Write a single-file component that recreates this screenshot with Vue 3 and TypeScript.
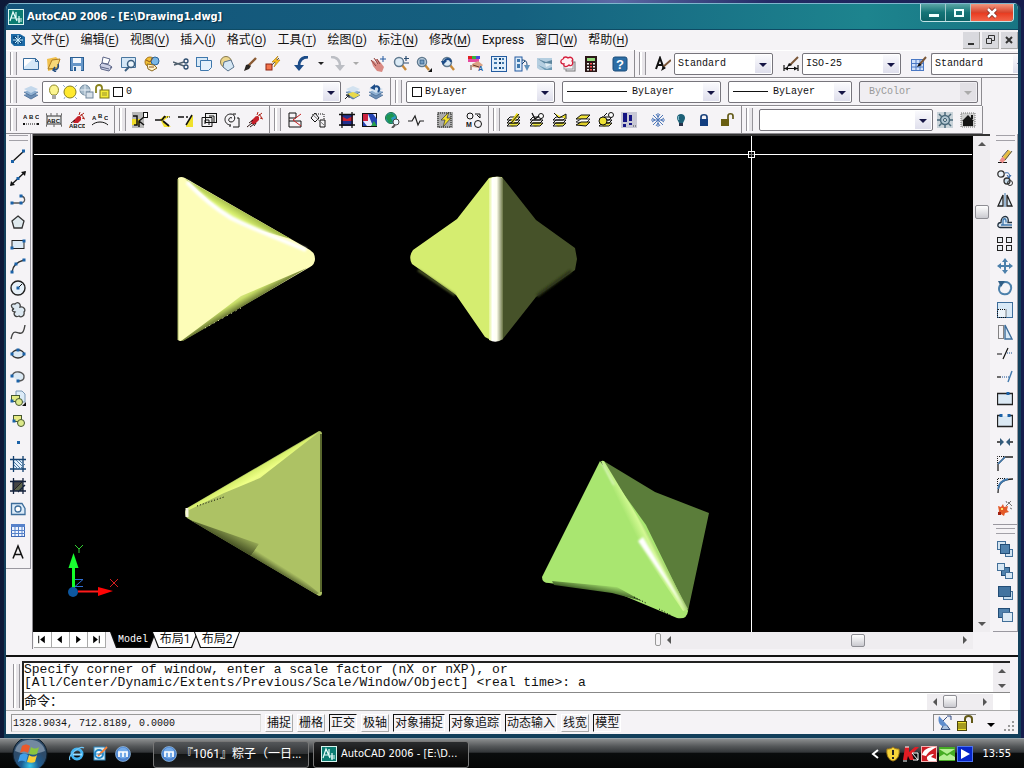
<script setup lang="ts">
import { h, ref } from 'vue'

const INK = '#111'
const NAVY = '#12406f'
const BLUE = '#3f78ad'

/* stroke, shape and label helpers for the 16-unit icon grid */
const p = (d: string, stroke = INK, fill = 'none', w = 1) =>
  `<path d="${d}" stroke="${stroke}" fill="${fill}" stroke-width="${w}"/>`
const f = (d: string, fill = INK) => `<path d="${d}" fill="${fill}"/>`
const c = (x: number, y: number, r: number, fill = 'none', stroke = INK, w = 1) =>
  `<circle cx="${x}" cy="${y}" r="${r}" fill="${fill}" stroke="${stroke}" stroke-width="${w}"/>`
const r = (x: number, y: number, w: number, hh: number, fill = 'none', stroke = 'none') =>
  `<rect x="${x}" y="${y}" width="${w}" height="${hh}" fill="${fill}" stroke="${stroke}"/>`
const dot = (x: number, y: number) => r(x - 1.5, y - 1.5, 3, 3, '#1b62a8')
const t = (x: number, y: number, s: string, size = 6, fill = INK, weight = 700) =>
  `<text x="${x}" y="${y}" font-size="${size}" font-weight="${weight}" font-family="Liberation Sans, sans-serif" fill="${fill}">${s}</text>`
const dash = (d: string, stroke = INK) => `<path d="${d}" stroke="${stroke}" fill="none" stroke-dasharray="1 1"/>`
const sheets = (top: string) =>
  f('M1 11l7-3 7 3-7 4z', '#6d8fb5') + f('M1 8l7-3 7 3-7 4z', '#8fb0d2') + f('M1 5l7-3 7 3-7 4z', top) + p('M1 8l7 4 7-4M1 11l7 4 7-4', '#54779f')
const layerStack = f('M2 11l8-1 4 2-8 3z', '#e8e23a') + p('M1 8l3-3h10l-3 3zM1 11l3-3h10l-3 3zM1 14l3-3h10l-3 3z')
const lens = (x: number, y: number) => p(`M${x + 3} ${y + 3}l4 5`, '#c98b3a', 'none', 2.4) + c(x, y, 4.5, '#dcebf6', '#60798f', 1.5)
const spark = p('M10 5l5-4M10 3l1-3M13 6l3 1M12 2l3 4', '#b02318')
const glove = f('M4 9l5-5 3 1 0 3-4 4-3 0z', '#c5202a') + p('M0 15l5-4M3 15l4-3M2 11l4-3M7 14l2-3', '#2a1010')
const brush = f('M2 15l2-6 3-1 2 2-2 3z', '#2b2622') + p('M7 9l7-7', '#8a5a33', 'none', 2.4)

const icons: Record<string, string> = {
  app: r(0, 0, 16, 16, '#0b7c72') + r(.5, .5, 15, 15, 'none', '#d8f5ef') + p('M2 12L5 3l4 9M8 3v7h6M3 9h4M11 7v7M14 12h-4', '#e9fffb', 'none', 1.2),
  dwg: f('M1 2h9l5 3v9H4L1 11z', '#1d6aa6') + r(3, 4, 9, 8, '#0d4e86') + p('M8 3v9M3 8h10M5 5l6 6M11 5l-6 6', '#c9efff'),
  new: p('M.5 2.5h12l3 3v8H.5z', '#376b9d', '#d5e8f8') + f('M1 3h9L1 11z', '#fff') + p('M12.5 2.500v3h3', '#376b9d'),
  open: f('M1 3l9-2 3 3-3 9-8 2z', '#f1c04d') + p('M2 13L6 4l8-1-3 9z', '#ad7d22', '#f8d977') + p('M8 14c4 0 5-3 4-6M9 11l-2 3 3 2', '#244f80', 'none', 1.5),
  save: r(1.5, 1.5, 13, 13, '#6797c8', '#2a5e93') + r(4, 2, 8, 5, '#f4f8fd') + r(4, 10, 8, 5, '#e9f1f9') + r(5, 11, 2, 4, '#2a5e93'),
  print: p('M5 1l7 2-2 5-6-1z', '#5c6587', '#fff') + p('M2 9l2-2 7 2 3 2-3 4-8-2z', '#5c6587', '#cdd1e6') + p('M3 11l8 2M12 12l2-1', '#5c6587'),
  preview: p('M.5 1.5h14v10H.5z', '#49769f', '#d5e7f6') + c(10, 8, 3.500, '#eef6fc', '#3b5f80', 1.5) + p('M8 11l-4 4', '#3b5f80', 'none', 2),
  publish: c(6, 6, 5, '#f2bf33', '#a9761c') + c(11, 5, 4, '#7bb8e6', '#2a639a') + p('M3 8l7 1 3 3-5 3-4-2z', '#8d6a1e', '#fff2c9') + p('M2 4l4 2 3-4M5 11h5', '#8c541b'),
  cut: c(13, 5, 2, 'none', '#2c4c6e', 1.3) + c(13, 11, 2, 'none', '#2c4c6e', 1.3) + p('M0 6l11 4M1 9l10-3', '#51606e', 'none', 1.5),
  copy: r(.5, 1.5, 11, 9, '#d8e9f7', '#3f78ad') + p('M4.500 4.500h11v7l-3 3h-8z', '#3f78ad', '#e6f1fb'),
  paste: c(7, 6, 5.500, '#ecd68d', '#87784b') + p('M5 6l7-2 3 7-6 4-5-4z', '#57728d', '#d6e7f4'),
  match: brush,
  block: r(1, 8, 6, 6, '#f3744c', '#8d2412') + p('M7 9l7-7', '#555') + f('M13 0L7 6h4l-2 5 6-7h-4z', '#ffc423') + p('M13 0L7 6h4l-2 5 6-7h-4z', '#ab7500', 'none', .6),
  undo: p('M14 1C7 1 5 5 5 10', '#1c4c88', 'none', 2.8) + f('M0 9h10l-5 6z', '#1c4c88'),
  redo: p('M2 1c7 0 9 4 9 9', '#bcbec4', 'none', 2.6) + f('M16 9H6l5 6z', '#bcbec4'),
  drop: f('M5 6h6l-3 3z', '#222'),
  dropOff: f('M5 6h6l-3 3z', '#aaa'),
  pan: f('M1 4l3 1 3 3-2-5 2 0 4 4 3 4-2 5-5-1-4-5z', '#d98983') + p('M1 4l5 6M4 2l4 6M7 3l3 5', '#8b4542') + p('M13 0v6M10 3h6', '#245ba0'),
  zoomRt: lens(6, 6) + p('M13 0v5M11 2.500h5M11 7h5', '#2a4c70', 'none', 1.2),
  zoomWin: lens(6, 6) + r(4, 4, 4, 4, '#729bc1', '#3b648c') + f('M16 12v4h-4z'),
  zoomPrev: lens(8, 6) + p('M12 6C11 2 7 2 5 6', '#1c4c88', 'none', 1.8) + f('M2 5h6L4 9z', '#1c4c88'),
  props: r(0, 0, 4, 3, '#e02020') + r(4, 0, 4, 3, '#36b53c') + r(8, 0, 4, 3, '#4a4ae0') + r(0, 3, 11, 3, '#e64aa0') + f('M4 8l6-3 5 4-3 3-8-1z', '#dba284') + p('M5 9l6 2M3 14V9', '#663c2a') + t(10, 15, 'A', 7, '#245ba0'),
  center: r(.5, .5, 15, 15, '#e1eefa', '#245ba0') + [2, 6, 11].map(y => r(3, y, 3, 2, '#3f78ad') + r(8, y, 2, 2, '#12406f') + r(11, y, 2, 2, '#3f78ad')).join(''),
  palette: r(1, 1, 7, 14, '#deecf9', '#245ba0') + r(3, 3, 3, 3, '#3f78ad') + r(3, 8, 3, 4, '#3f78ad') + p('M8 4c5 0 5 3 5 6M8 8l3-3', NAVY) + f('M10 9l3 6 3-6z', '#5f91bb'),
  sheetset: f('M0 2h15v12H3l-3-2z', '#b5cee0') + f('M1 3l8 3 6-2v4l-5 1z', '#5c859e') + f('M1 9l9 4 5-2v3l-7 0z', '#6d9ab4') + f('M8 7l7 1-6 3z', '#e0edf4'),
  markup: r(6, 6, 9, 9, '#e7e7ee', '#777') + r(4, 4, 9, 9, '#f7f7fb', '#999') + p('M3 3C4 0 7 1 8 2c3-2 6 1 4 3 2 3-1 6-3 4-3 3-6 1-5-1C0 8 0 4 3 3z', '#d51f3c', '#fff1f3', 1.3),
  calc: r(2, 0, 12, 16, '#2b1717') + r(4, 2, 8, 3, '#93d97b') + [7, 10, 13].map(y => r(4, y, 2, 1.500, '#eee') + r(7, y, 2, 1.500, '#f55') + r(10, y, 2, 1.500, '#eee')).join(''),
  help: `<rect x="1" y="1" width="14" height="14" rx="2" fill="#2c6da5" stroke="#1b4d7a"/>` + t(4, 13, '?', 13, '#fff'),
  textStyle: p('M1 13L5 2l4 11M2 9h6', INK, 'none', 2) + p('M8 11l8-7', '#7a5638', 'none', 2) + f('M6 15l2-5 3 2z'),
  dimStyle: p('M1 9v6M15 9v6M1 12.500h14', INK, 'none', 1.2) + f('M1 12.500l4-2v4zM15 12.500l-4-2v4z') + p('M7 9l8-8', '#7a5638', 'none', 2) + f('M4 11l2-4 3 2z'),
  tableStyle: r(.5, 3.500, 12, 11, '#cfe1fb', '#4a78c4') + p('M1 7.500h12M1 11h12M5 4v10M9 4v10', '#4a78c4') + p('M9 8l6-7', '#7a5638', 'none', 2) + f('M6 11l2-4 3 2z'),
  layers: sheets('#c3d7eb'),
  layerCur: sheets('#d3e2f0') + f('M2 10l7 4 6-3-7-3z', '#e8d94a') + p('M0 15l4-4M1 11h3v3', '#222'),
  layerPrev: sheets('#d3e2f0') + p('M10 8c3-4 0-7-4-5', '#1c4c88', 'none', 2) + f('M2 4l5-4v6z', '#1c4c88'),
  bulb: p('M6 11C2 8 3 1 8 1s6 7 2 10z', '#8f8a2a', '#fcf590') + r(6, 11, 4, 4, '#a7a7a7'),
  sun: c(8, 8, 6, '#ffe92e', '#877f1f') + p('M3 13l-1 2M13 13l2 2M3 3L1 1M13 3l2-2', '#92abd0'),
  freeze: c(7, 6, 5, '#a7bbcb', '#6f899e') + r(8, 8, 7, 6, '#d9e2ea', '#70869b') + p('M7 1v10M2 6h10', '#e7f0f7'),
  unlock: p('M2 9V4c0-4 6-4 6 0v2', '#8a831c', 'none', 1.8) + r(6, 6, 9, 8, '#f6ec37', '#79731b') + p('M8 9h5M8 11h5', '#97902e'),
  swatch: r(3.500, 3.500, 9, 9, '#fff', INK),
  abcDots: t(0, 7, 'A', 6) + t(6, 7, 'B', 6) + t(12, 7, 'C', 6) + dash('M1 12h14') + r(0, 11, 2, 2, INK) + r(14, 11, 2, 2, INK),
  abcMask: r(1, 4, 14, 8, '#eee', '#333') + t(1, 11, 'ABC', 6) + p('M1 4L0 1M15 4l1-3M5 4V1M11 4V1M1 12l-1 3M15 12l1 3M8 12v3', '#666'),
  abcBurst: glove + spark + r(0, 11, 16, 5, '#f5f3f6') + t(0, 16, 'ABCD', 6),
  abcArc: t(0, 8, 'A', 6) + t(6, 6, 'B', 6) + t(12, 8, 'C', 6) + p('M0 13c4-4 12-4 16 0'),
  attach: r(0, 0, 12, 16, '#b8b8b8') + r(11.500, .5, 4, 5, '#fff', INK) + r(0, 7, 8, 6, '#f0dc26') + p('M1 4h4v9H2M12 5L7 9v6M7 9l5 4', INK, 'none', 1.5),
  clip1: f('M5 7l4-3h6L8 9l8 6H9z', '#f0e12c') + p('M0 8h7l3-4M8 9l6 5', INK, 'none', 1.7) + dash('M10 5h6'),
  clip2: f('M9 10l6-7v12H8z', '#f0e12c') + p('M0 5h6M8 5h2M8 13l6-10', INK, 'none', 1.5),
  copyNest: r(4.500, 1.500, 11, 9, '#eee', INK) + p('M1 5.500h10v9H1zM4 12V8h4v5M8 4h5v7'),
  spiral: p('M8 6c-3-2-5 4-1 4 5 0 5-8 0-8-8 0-8 11 0 11M13 6h2v9H9') + p('M9 2h3M6 13v2', INK),
  hand: glove + spark,
  wipe: p('M2 15V1h7v5H2M2 9h12v6H2') + p('M14 2L6 8l8 6', '#c72222'),
  stretch: p('M1 6l4-5 4 5-4 4zM10 8h5v7h-5z') + p('M2 2l12 11', '#777') + dash('M6 2h8v5'),
  img1: r(2, 2, 12, 12, '#23308f') + f('M2 4l6 3 6-3v5H2z', '#cf2030') + p('M0 2.500h16M0 13h16M3 0v16M13 0v16', INK, 'none', 1.3),
  img2: r(.5, 1.500, 14, 13, '#e8eaff', INK) + f('M1 2h5v7H1z', '#cb2341') + f('M6 2h5l4 5v7h-4z', '#2444b2') + f('M9 14l3-5 3 5z', '#29a04c') + f('M1 9l4 5H1z', '#2444b2'),
  globe: c(6, 6, 5.500, '#2c9ac4', '#177148') + f('M2 3l5-2 3 3-4 2 2 4-4 1-3-5z', '#1c9651') + c(11, 10, 3, '#eef7ff', '#444') + p('M10 13l-3 3', '#555', 'none', 2),
  breakline: p('M0 9h4l3-5 3 9 2-4h4', '#222', 'none', 1.2),
  superHatch: r(0, 0, 16, 16, '#aaa') + dash('M1 1h13v14H1z') + f('M12 0L4 8h4l-2 7 8-9h-4z', '#f2df27') + p('M12 0L4 8h4l-2 7 8-9h-4z', '#333', 'none', .7),
  moco: c(4, 4, 3) + c(12, 12, 3.500) + t(0, 15, 'M', 7) + p('M9 2h5v4M11 3l3 3'),
  lay1: layerStack + p('M6 10l6-8', '#e5d518', 'none', 3) + p('M5 11l8-9'),
  lay2: layerStack + c(12, 4, 2.500, '#fff') + p('M3 1l3 6 4-3', INK, 'none', 1.3),
  lay3: layerStack + p('M2 1l5 5 7-4v5', INK, '#eee22a'),
  lay4: p('M1 7l5-4h9l-4 4z', INK, '#f0e238') + p('M1 10l5-3h9l-4 4z', '#333', '#fff') + p('M1 13l5-3h9l-4 4z', INK, '#dfcf29'),
  lay5: layerStack + c(5, 9, 4, '#eee233') + c(13, 3, 2.500, '#fff') + p('M6 4l3-3', INK),
  lay6: r(0, 0, 16, 16, '#c8c8d5') + f('M2 1h4v9H2zM2 12h3v3H2zM8 3h3v6H8zM8 11h3v2H8z', '#151584') + dash('M12 14h4', '#444'),
  snow: p('M8 1v14M1 8h14M3 3l10 10M13 3L3 13M6 2l2 3 2-3M6 14l2-3 2 3M2 6l3 2-3 2M14 6l-3 2 3 2', '#4d76b8'),
  bulbOff: f('M8 2C4 2 3 6 5 9l1 2h4l1-2c2-3 1-7-3-7z', '#1c6077') + r(6, 11, 4, 3, '#27324a') + p('M6 4c-1 1-1 3 0 4', '#91cad8'),
  lock: p('M5 8V5c0-3 6-3 6 0v3', '#173f79', 'none', 1.7) + r(4, 7, 8, 7, '#123e80'),
  lockOpen: p('M9 7V4c0-3 5-3 5 0v3', '#625916', 'none', 1.7) + r(2, 7, 8, 7, '#695e12'),
  gear: r(0, 0, 16, 16, '#c9d3d9') + c(8, 8, 4.500, '#b5c8d4', '#4b6a7b', 1.5) + c(8, 8, 1.500, '#fff', '#315466') + p('M8 0v4M8 12v4M0 8h4M12 8h4M2 2l3 3M14 2l-3 3M2 14l3-3M14 14l-3-3', '#4b6a7b', 'none', 1.5),
  home: r(1, 1, 14, 14, '#cfcfcf') + dash('M1 1h14v14H1z', '#777') + f('M8 3L2 9h1v5h10V9h1z', '#151515') + r(11, 3, 2, 4, '#151515'),
  line: p('M2 14L14 3', INK, 'none', 1.3) + dot(2.500, 13.500) + dot(13.500, 3),
  xline: p('M1 15L15 2', INK, 'none', 1.3) + f('M0 16l1-5 4 4zM16 1l-5 1 4 4z') + dot(8, 8.500),
  pline: p('M2 11h9c5 0 5-7-1-7', '#555', 'none', 1.3) + dot(2, 11) + dot(11, 11) + dot(11, 4),
  polygon: p('M8 2l6 5-2 7H4L2 7z', '#333', '#dfe9ee', 1.3),
  rect: r(2, 4.500, 12, 8, '#dceaf6', '#222') + dot(2, 12) + dot(14, 5),
  arc: p('M2 14Q3 5 14 2', '#333', 'none', 1.3) + dot(2, 14) + dot(6, 6) + dot(14, 2),
  circle: c(8, 8, 7, '#e6f0f8', '#222', 1.4) + p('M8 8l4-4') + dot(8, 8),
  cloud: p('M4 7C0 5 1 1 5 2c3-3 6 0 5 3 4-1 6 3 4 5 1 4-3 6-5 4-4 2-6-2-4-4-4-1-3-3-1-3z', '#444', '#dce8f1', 1.3),
  spline: p('M1 15C3 6 5 8 9 9s5-2 6-8', '#444', 'none', 1.4),
  ellipse: `<ellipse cx="8" cy="8" rx="6" ry="4" fill="#dbe9f4" stroke="#333" stroke-width="1.3"/>` + dot(8, 4) + dot(2, 8) + dot(14, 8),
  earc: p('M2 8c2-7 13-4 12 1 0 3-3 4-6 4', '#555', '#dbe9f4', 1.4) + dot(2, 8) + dot(8, 13),
  insert: p('M6 1h6l3 3v8H6z', '#7a98b4', '#dcebf7') + r(1.500, 5.500, 8, 6, '#e2ea83', '#455730') + c(9, 12, 3.500, '#dce98a', '#455730') + dot(2, 11) + f('M16 12v4h-4z'),
  mkblock: r(3.500, 3.500, 8, 6, '#e7ea83', '#455730') + c(11, 11, 3.500, '#dce98a', '#455730') + dot(4, 9),
  point: dot(8.500, 8.500),
  hatch: r(3, 3, 10, 10, '#e3f0fb') + p('M0 3.500h16M0 13h16M3.500 0v16M13 0v16', NAVY, 'none', 1.3) + p('M4 6l7 7M4 9l4 4M6 4l7 7M9 4l4 4M9 14l6-6', '#4e7ba5'),
  gradient: r(3, 3, 10, 10, '#5d644c') + p('M3 3h10L3 13z', '#222', '#444') + p('M0 3.500h16M0 13h16M3.500 0v16M13 0v16M8 14l7-7', '#13213c', 'none', 1.3),
  region: p('M1.500 3.500H12l3 5v6H1.500z', '#3d6d9b', '#dcebf8', 1.3) + c(8, 9, 3, '#fff', '#3d6d9b', 1.3),
  table: r(1.500, 2.500, 13, 12, '#f0f6ff', '#3c67b5') + r(1, 2, 14, 3, '#5782ca') + p('M1 8.500h14M1 11.500h14M5 5v9M8.500 5v9M12 5v9', '#5782ca'),
  mtext: p('M3 14.500L8 2l5 12.500M5 10.500h6', INK, 'none', 1.5),
  erase: p('M1 14.500h9', INK) + p('M6 12l7-9', '#e5bd41', 'none', 4) + p('M4 14l3-4', '#ee8d8b', 'none', 4) + p('M8 12l7-9M5 9l6-7', '#555'),
  mcopy: c(4, 4, 3.200, '#eaf1f7', '#333', 1.3) + c(10, 11, 3, '#c7dcec', '#333', 1.3) + c(13, 13, 2.500, 'none', '#333') + p('M8 3c4-1 5 1 4 4M10 5l2 3 2-3', '#245ba0'),
  mirror: p('M6 3v11H1zM10 3v11h5z', '#222', '#d9e8f5', 1.3) + p('M8 1v14', BLUE),
  offset: p('M3 13.500h12M3 13.500c-3 0-3-5 1-5 0-8 9-8 7 0h4', '#22313e', '#dce9f5', 1.3) + p('M15 11H4M6 11V7c0-3 3-3 3 0v1.500', BLUE, 'none', 1.3),
  array: [[0, 1], [9, 1], [0, 9], [9, 9]].map(([x, y]) => r(x + .5, y + .5, 5, 5, '#e9eef2', '#222')).join(''),
  move: p('M8 2v12M2 8h12', '#4c80ab', 'none', 2) + f('M8 0l3 4H5zM8 16l3-4H5zM0 8l4-3v6zM16 8l-4-3v6z', '#4c80ab'),
  rotate: p('M5 3c5-3 10 1 9 6-2 8-12 6-12 0 0-2 1-4 3-5', '#4c80ab', 'none', 2) + f('M1 1h7L4 7z', '#315e85'),
  scale: r(.5, .5, 15, 15, '#d9e9f6', '#3d6d9b') + r(1, 7, 8, 8, '#edf4fa') + dash('M1 7.500h8v8H.5v-8'),
  stretchM: p('M8 1l7 14H8z', '#3d6d9b', '#d9e9f6', 1.4) + dash('M1.500 1.500h5v13h-5z'),
  trim: p('M0 8h5M6 13L11 2', INK, 'none', 1.2) + dash('M10 7h6', '#174f91'),
  extend: p('M0 9h4', INK, 'none', 1.2) + p('M11 14l4-11', BLUE, 'none', 1.4) + dash('M5 9h7', '#174f91'),
  breakAt: p('M.5 3.500h15v11H.5z', '#222', '#dbe9f4', 1.3) + dot(11, 3.500),
  breakG: r(1, 4, 14, 10, '#dbe9f4') + p('M3 3.500H.5v11h15v-11H13', '#222', 'none', 1.3) + dot(4, 3.500) + dot(12, 3.500),
  join: p('M0 8h4M12 8h4', '#222', 'none', 1.5) + f('M3 4l4 4-4 4zM13 4L9 8l4 4z', '#345b7b'),
  chamfer: p('M1 15V8l7-7h8', '#222', 'none', 1.3) + p('M1 8l7-7', BLUE, 'none', 1.5) + dash('M.5 7V.5H8'),
  fillet: p('M1 15C1 5 6 1 16 1', '#222', 'none', 1.3) + p('M1 11C2 5 6 2 11 1', BLUE, 'none', 1.8) + dash('M.5 8V.5H8'),
  explode: f('M1 6l3 1 2-3 1 3 4-1-1 4 2 2-4 1-1 3-3-2-3 1 1-4z', '#e35a29') + r(4, 8, 2, 2, '#ffe36b') + r(1, 12, 3, 3, '#a12214') + p('M9 6l5-5M11 2l4 4M9 1l1 2M13 8l2 1', '#777'),
  front: r(.5, .5, 8, 8, '#d2e3f1', '#426f99') + r(8.500, 8.500, 7, 7, '#d2e3f1', '#426f99') + r(3.500, 3.500, 9, 9, '#4f81ad', '#234d76'),
  back: r(4.500, 4.500, 8, 8, '#4f81ad', '#234d76') + r(.5, .5, 7, 7, '#d7e7f4', '#426f99') + r(8.500, 9.500, 7, 6, '#d7e7f4', '#426f99'),
  above: r(6.500, 6.500, 9, 8, '#c9ddec', '#426f99') + r(1.500, 1.500, 12, 10, '#42739f', '#234d76'),
  under: r(1.500, 1.500, 11, 9, '#4f81ad', '#234d76') + r(5.500, 5.500, 10, 9, '#dbe9f4', '#426f99'),
  ie: c(8, 8, 5, 'none', '#43b4f2', 3) + p('M4 8.500h9', '#9adcff', 'none', 2) + p('M1 14C-2 10 11-1 15 2', '#70c4f2', 'none', 1.2),
  mail: r(2, 1, 11, 13, '#d2edf9', '#2e87bf') + c(7, 8, 4, '#fff', '#2289cb', 2) + p('M6 10l9-9', '#f07f39', 'none', 1.8) + p('M4 8h6', '#2289cb'),
  maxthon: c(8, 8, 7.500, '#4b82ce', '#a9d1f4', .6) + c(8, 7, 5.500, '#73aae8', 'none') + p('M4 11V6h8v5M8 6v5', '#fff', 'none', 1.700),
  shield: p('M8 1c2 2 4 2 6 2 1 7-2 11-6 12C4 14 1 10 2 3c2 0 4 0 6-2z', '#a37b16', '#f6d439') + r(7, 4, 2, 5, '#222') + r(7, 11, 2, 2, '#222'),
  kav: f('M2 1h4v5l6-5h4L9 8l2 6H7L5 10l-1 4H0z', '#e11c24') + p('M2 1h4M0 15h4M9 7h6v7M9 7l6 7h-5', '#fff'),
  rising: r(0, 0, 16, 16, '#cf1d25') + f('M16 1C8 0 2 4 1 9l4 1c3-5 7-7 11-9z', '#fff') + f('M6 11c3-3 5-3 7-3l-3 3 5 2v2H9c-3 0-3-2-3-4z', '#fff') + r(.5, .5, 15, 15, 'none', '#f3b3b3'),
  nv: r(0, 1, 16, 14, '#46ac24') + f('M0 3h16L8 8zM0 11l5-3 3 2 3-2 5 3v3H0z', '#b6ef94'),
  play: r(0, 0, 16, 16, '#0625c9') + r(.5, .5, 15, 15, 'none', '#4d74f0') + f('M4 3l9 5-9 5z', '#fff'),
  dish: f('M2 1l9 10c-7 2-11-3-9-10z', '#5e8ccc') + p('M6 6l4-4M10 1h4v4', '#364d80', '#dbe6f5') + p('M6 11l-2 3.500h9l-3-4', '#344d7b', '#a9c1e0'),
  trayLock: p('M8 7V4c0-4 7-4 7 0v4', '#625916', 'none', 2) + r(.5, 6.500, 9, 9, '#efe331', '#4c450b') + p('M1 9h9M1 11h9M1 13h9', '#5c5511'),
}

const Icon = (props: { n: string }) =>
  h('svg', { viewBox: '0 0 16 16', 'aria-hidden': 'true', class: 'icon', innerHTML: icons[props.n] })
Icon.props = ['n']

const menus: [string, string][] = [
  ['文件', 'F'], ['编辑', 'E'], ['视图', 'V'], ['插入', 'I'], ['格式', 'O'], ['工具', 'T'],
  ['绘图', 'D'], ['标注', 'N'], ['修改', 'M'], ['Express', ''], ['窗口', 'W'], ['帮助', 'H'],
]
const std = [
  ['new', 'open', 'save'], ['print', 'preview', 'publish'], ['cut', 'copy', 'paste', 'match', 'block'],
  ['undo', 'drop', 'redo', 'dropOff'], ['pan', 'zoomRt', 'zoomWin', 'zoomPrev'],
  ['props', 'center', 'palette', 'sheetset', 'markup', 'calc'], ['help'],
]
const styles: [string, string, string][] = [
  ['textStyle', 'Standard', 'Text style'], ['dimStyle', 'ISO-25', 'Dimension style'], ['tableStyle', 'Standard', 'Table style'],
]
const express = [
  [['abcDots', 'abcMask', 'abcBurst', 'abcArc']],
  [['attach', 'clip1', 'clip2', 'copyNest', 'spiral', 'hand']],
  [['wipe', 'stretch'], ['img1', 'img2', 'globe', 'breakline'], ['superHatch'], ['moco']],
  [['lay1', 'lay2', 'lay3', 'lay4', 'lay5', 'lay6'], ['snow', 'bulbOff', 'lock', 'lockOpen']],
]
const draw = ['line', 'xline', 'pline', 'polygon', 'rect', 'arc', 'circle', 'cloud', 'spline', 'ellipse', 'earc', 'insert', 'mkblock', 'point', 'hatch', 'gradient', 'region', 'table', 'mtext']
const modify = ['erase', 'mcopy', 'mirror', 'offset', 'array', 'move', 'rotate', 'scale', 'stretchM', 'trim', 'extend', 'breakAt', 'breakG', 'join', 'chamfer', 'fillet', 'explode']
const order = ['front', 'back', 'above', 'under']
const nav: [string, string][] = [
  ['First tab', 'M4 4v8h1V4zM11 4v8L6 8z'], ['Previous tab', 'M10 4v8L5 8z'],
  ['Next tab', 'M6 4v8l5-4z'], ['Last tab', 'M5 4v8l5-4zM11 4v8h1V4z'],
]
const tabs = ['Model', '布局1', '布局2']
const tab = ref('Model')
const modes = ref([
  { name: '捕捉', on: false }, { name: '栅格', on: false }, { name: '正交', on: true },
  { name: '极轴', on: false }, { name: '对象捕捉', on: true }, { name: '对象追踪', on: true },
  { name: '动态输入', on: true }, { name: '线宽', on: false }, { name: '模型', on: true },
])
const command = ref('')
const tray = ['shield', 'kav', 'rising', 'nv', 'play']
</script>

<template>
  <div class="desktop">
    <main class="window">
      <header class="title">
        <Icon n="app" />
        <h1>AutoCAD 2006 - [E:\Drawing1.dwg]</h1>
        <div class="wbtns">
          <button aria-label="Minimize"><svg viewBox="0 0 26 16"><path d="M8 9h10v3H8z" fill="#f1ffff" /></svg></button>
          <button aria-label="Maximize"><svg viewBox="0 0 26 16"><path d="M9 5h8v6H9z" fill="none" stroke="#f1ffff" stroke-width="2" /></svg></button>
          <button class="close" aria-label="Close"><svg viewBox="0 0 26 16"><path d="M9 4l8 8M17 4l-8 8" stroke="#7d2a20" stroke-width="4" /><path d="M9 4l8 8M17 4l-8 8" stroke="#fff" stroke-width="2.500" /></svg></button>
        </div>
      </header>

      <nav class="menu">
        <Icon n="dwg" />
        <button v-for="[name, key] in menus" :key="name">{{ name }}<template v-if="key">(<u>{{ key }}</u>)</template></button>
        <div class="mdi">
          <button aria-label="Minimize drawing"><svg viewBox="0 0 16 16"><path d="M5 11h6v2H5z" fill="#333" /></svg></button>
          <button aria-label="Restore drawing"><svg viewBox="0 0 16 16"><path d="M6.500 6V3.500h6v5H10M4.500 6.500h5v5h-5z" fill="none" stroke="#333" /></svg></button>
          <button aria-label="Close drawing"><svg viewBox="0 0 16 16"><path d="M5 5l6 6M11 5l-6 6" stroke="#333" stroke-width="2" /></svg></button>
        </div>
      </nav>

      <div class="row">
        <div class="bar first">
          <i class="grip" />
          <div v-for="(g, i) in std" :key="i" class="group">
            <button v-for="n in g" :key="n" class="tool" :class="{ slim: n.startsWith('drop') }" :aria-label="n"><Icon :n="n" /></button>
          </div>
        </div>
        <div class="bar grow">
          <i class="grip" />
          <template v-for="[ic, val, label] in styles" :key="ic">
            <button class="tool" :aria-label="label + ' settings'"><Icon :n="ic" /></button>
            <div class="combo style">
              <select :aria-label="label"><option>{{ val }}</option></select>
              <span class="arrow" />
            </div>
          </template>
        </div>
      </div>

      <div class="row">
        <div class="bar first">
          <i class="grip" />
          <button class="tool" aria-label="Layer properties"><Icon n="layers" /></button>
          <div class="combo layer">
            <Icon n="bulb" /><Icon n="sun" /><Icon n="freeze" /><Icon n="unlock" /><Icon n="swatch" />
            <select aria-label="Layer"><option>0</option></select>
            <span class="arrow" />
          </div>
          <button class="tool" aria-label="Make layer current"><Icon n="layerCur" /></button>
          <button class="tool" aria-label="Layer previous"><Icon n="layerPrev" /></button>
        </div>
        <div class="bar bylayer">
          <i class="grip" />
          <div class="combo color">
            <Icon n="swatch" />
            <select aria-label="Color"><option>ByLayer</option></select>
            <span class="arrow" />
          </div>
          <div class="combo ltype">
            <i class="rule" />
            <select aria-label="Linetype"><option>ByLayer</option></select>
            <span class="arrow" />
          </div>
          <div class="combo weight">
            <i class="rule" />
            <select aria-label="Lineweight"><option>ByLayer</option></select>
            <span class="arrow" />
          </div>
          <div class="combo plot">
            <select aria-label="Plot style" disabled><option>ByColor</option></select>
            <span class="arrow" />
          </div>
        </div>
      </div>

      <div class="row">
        <div v-for="(b, i) in express" :key="i" class="bar" :class="{ first: i === 0 }">
          <i class="grip" />
          <div v-for="(g, j) in b" :key="j" class="group">
            <button v-for="n in g" :key="n" class="tool" :aria-label="n"><Icon :n="n" /></button>
          </div>
        </div>
        <div class="bar">
          <i class="grip" />
          <div class="combo space">
            <select aria-label="Workspace"><option></option></select>
            <span class="arrow" />
          </div>
          <button class="tool" aria-label="Workspace settings"><Icon n="gear" /></button>
          <button class="tool" aria-label="My workspace"><Icon n="home" /></button>
        </div>
      </div>

      <section class="work">
        <aside class="side">
          <div class="vbar">
            <i class="vgrip" />
            <button v-for="n in draw" :key="n" class="tool" :aria-label="n"><Icon :n="n" /></button>
          </div>
        </aside>

        <div class="center">
          <svg class="canvas" viewBox="33 136 940 496" preserveAspectRatio="xMinYMin slice" role="img" aria-label="Shaded solids">
            <defs>
              <linearGradient id="top1" gradientUnits="userSpaceOnUse" x1="237" y1="204" x2="226" y2="222"><stop offset="0" stop-color="#8fa53c" /><stop offset=".5" stop-color="#d8f06f" /><stop offset="1" stop-color="#fff" /></linearGradient>
              <linearGradient id="bot1" gradientUnits="userSpaceOnUse" x1="236" y1="292" x2="247" y2="311"><stop offset="0" stop-color="#fdfdb8" /><stop offset=".4" stop-color="#c6dc66" /><stop offset="1" stop-color="#171c05" /></linearGradient>
              <linearGradient id="ridge2"><stop offset="0" stop-color="#e4f493" /><stop offset=".25" stop-color="#fff" /><stop offset=".55" stop-color="#fffff0" /><stop offset="1" stop-color="#697444" /></linearGradient>
              <linearGradient id="top3" gradientUnits="userSpaceOnUse" x1="250" y1="469" x2="261" y2="488"><stop offset="0" stop-color="#cce760" /><stop offset=".45" stop-color="#eeff86" /><stop offset="1" stop-color="#dfea7c" /></linearGradient>
              <linearGradient id="bot3" gradientUnits="userSpaceOnUse" x1="255" y1="538" x2="246" y2="555"><stop offset="0" stop-color="#adc264" /><stop offset="1" stop-color="#39431c" /></linearGradient>
              <linearGradient id="low3" gradientUnits="userSpaceOnUse" x1="286" y1="569" x2="281" y2="577"><stop offset="0" stop-color="#adc264" /><stop offset="1" stop-color="#39431c" /></linearGradient>
              <linearGradient id="up4" gradientUnits="userSpaceOnUse" x1="620" y1="504" x2="636" y2="496"><stop offset="0" stop-color="#a9e670" /><stop offset=".5" stop-color="#d2f992" /><stop offset="1" stop-color="#6c9546" /></linearGradient>
              <linearGradient id="bot4" gradientUnits="userSpaceOnUse" x1="605" y1="584" x2="603" y2="595"><stop offset="0" stop-color="#a9e670" /><stop offset="1" stop-color="#2e491a" /></linearGradient>
              <filter id="soft"><feGaussianBlur stdDeviation="1" /></filter>
            </defs>
            <rect x="33" y="136" width="1900" height="1200" fill="#000" />

            <path d="M178 178q3-2 7 0l125 72q5 3 5 9 0 5-5 8l-126 73q-4 2-6 0z" fill="#fdfdb8" />
            <path d="M184 178l107 61-40-11q-16-6-26-13z" fill="url(#top1)" />
            <path d="M187 182q21 22 44 36 18 9 75 32" fill="none" stroke="#fff" stroke-width="4" filter="url(#soft)" />
            <path d="M181 341q34-25 60-45l66-28-67 40-57 33z" fill="url(#bot1)" />
            <path d="M178 179v161" stroke="#a9b765" />
            <path d="M205 328l36-20" stroke="#e7f1aa" stroke-dasharray="1 4" />

            <path d="M489 178l-32 41-44 31q-5 7-1 14l44 31 29 42q10 6 17 2V177q-8-1-13 1z" fill="#d5ed70" />
            <path d="M502 177l34 43 39 28 2 11-2 11-39 27-34 43z" fill="#465229" />
            <path d="M489 179q7-4 14-1v161q-7 5-14 1z" fill="url(#ridge2)" />
            <path d="M418 270l37 25" stroke="#657434" stroke-width="2" filter="url(#soft)" />
            <path d="M537 296l34-25" stroke="#2b3318" stroke-width="3" filter="url(#soft)" />

            <path d="M187 508l132-77q3 0 3 3v159q0 3-3 3l-132-78q-4-5 0-10z" fill="#adc264" />
            <path d="M188 508l131-76-59 46-36 15-35 17z" fill="url(#top3)" />
            <path d="M190 520l69 24-8 12z" fill="url(#bot3)" />
            <path d="M259 544l60 49q-2 2-5 0l-63-37z" fill="url(#low3)" />
            <path d="M321 434v158" stroke="#59672d" stroke-width="2" />
            <path d="M187 508v9" stroke="#f5f5dc" stroke-width="3" />
            <path d="M197 506l27-9" stroke="#000" stroke-dasharray="1 2" />

            <path d="M602 460l53 32 54 21-21 98-7 7z" fill="#5b7d3a" />
            <path d="M600 461l-58 116q0 6 7 6l66 9 62 26q10 2 11-7l-42-86z" fill="#a9e670" />
            <path d="M601 461h3l41 68 43 80-5 2-47-69z" fill="url(#up4)" />
            <path d="M638 541l5-4 44 75z" fill="#fff" filter="url(#soft)" />
            <path d="M602 463l12 22" stroke="#fff" filter="url(#soft)" />
            <path d="M552 581l65 6 25 14-30-8-58-8z" fill="url(#bot4)" />
            <path d="M634 597l12 6M659 609l13 7" stroke="#000" stroke-dasharray="1 2" />

            <path d="M34 154.500h938M751.500 136v496" stroke="#fff" />
            <rect x="748.500" y="151.500" width="6" height="6" fill="#000" stroke="#fff" />
            <path d="M749 154.500h5M751.500 152v5" stroke="#888" />

            <path d="M73.500 590v-24" stroke="#14ff28" stroke-width="3" />
            <path d="M73.500 553l5 15h-10z" fill="#18ff30" />
            <path d="M78 591.500h22" stroke="#ff1b1b" stroke-width="2" />
            <path d="M98 587l15 4-15 5z" fill="#ff0505" />
            <circle cx="73" cy="592" r="5" fill="#0d579f" />
            <path d="M75 545l4 4 4-4M79 549v4" fill="none" stroke="#31cf31" />
            <path d="M110 579l8 8M118 579l-8 8" stroke="#d61f1f" />
            <path d="M75 579.500h8l-8 7h8" fill="none" stroke="#306fd2" />
          </svg>
          <div class="scroll v">
            <button aria-label="Scroll up"><svg viewBox="0 0 16 16"><path d="M4 10h8L8 6z" fill="#555" /></svg></button>
            <div class="track"><i class="thumb" /></div>
            <button aria-label="Scroll down"><svg viewBox="0 0 16 16"><path d="M4 6h8l-4 4z" fill="#555" /></svg></button>
          </div>
          <div class="tabs">
            <div class="nav">
              <button v-for="[label, d] in nav" :key="label" :aria-label="label"><svg viewBox="0 0 16 16"><path :d="d" /></svg></button>
            </div>
            <button v-for="n in tabs" :key="n" class="tab" :class="{ on: tab === n }" @click="tab = n"><span>{{ n }}</span></button>
            <div class="hzone">
              <i class="split" />
              <div class="scroll">
                <button aria-label="Scroll left"><svg viewBox="0 0 16 16"><path d="M10 4v8L6 8z" fill="#555" /></svg></button>
                <div class="track"><i class="thumb" /></div>
                <button aria-label="Scroll right"><svg viewBox="0 0 16 16"><path d="M6 4v8l4-4z" fill="#555" /></svg></button>
              </div>
            </div>
          </div>
        </div>

        <aside class="side right">
          <div class="vbar">
            <i class="vgrip" />
            <button v-for="n in modify" :key="n" class="tool" :aria-label="n"><Icon :n="n" /></button>
          </div>
          <div class="vbar">
            <i class="vgrip" />
            <button v-for="n in order" :key="n" class="tool" :aria-label="n"><Icon :n="n" /></button>
          </div>
        </aside>
      </section>

      <section class="command">
        <i class="grip" />
        <div class="cmd">
          <div class="history">
            <pre>Specify corner of window, enter a scale factor (nX or nXP), or
[All/Center/Dynamic/Extents/Previous/Scale/Window/Object] &lt;real time&gt;: a</pre>
            <div class="scroll v small">
              <button aria-label="History up"><svg viewBox="0 0 16 16"><path d="M4 10h8L8 6z" fill="#555" /></svg></button>
              <button aria-label="History down"><svg viewBox="0 0 16 16"><path d="M4 6h8l-4 4z" fill="#555" /></svg></button>
            </div>
          </div>
          <div class="entry">
            <label for="cmd">命令：</label>
            <input id="cmd" v-model="command" type="text" autocomplete="off">
            <div class="scroll short">
              <button aria-label="Command left"><svg viewBox="0 0 16 16"><path d="M10 4v8L6 8z" fill="#555" /></svg></button>
              <div class="track"><i class="thumb" /></div>
              <button aria-label="Command right"><svg viewBox="0 0 16 16"><path d="M6 4v8l4-4z" fill="#555" /></svg></button>
            </div>
          </div>
        </div>
      </section>

      <footer class="status">
        <output>1328.9034, 712.8189, 0.0000</output>
        <button v-for="m in modes" :key="m.name" class="mode" :class="{ on: m.on }" :aria-pressed="m.on" @click="m.on = !m.on">{{ m.name }}</button>
        <div class="stray"><Icon n="dish" /><Icon n="trayLock" /></div>
        <button class="more" aria-label="Status bar menu"><svg viewBox="0 0 16 16"><path d="M4 8h8l-4 4z" /></svg></button>
        <svg class="size" viewBox="0 0 12 12" aria-hidden="true"><path d="M9 1h2v2H9zM5 5h2v2H5zM9 5h2v2H9zM1 9h2v2H1zM5 9h2v2H5zM9 9h2v2H9z" fill="#999" /></svg>
      </footer>
    </main>

    <footer class="taskbar">
      <button class="orb" aria-label="Start">
        <svg viewBox="0 0 36 36">
          <defs>
            <radialGradient id="orbFill" cy=".85"><stop offset="0" stop-color="#38c7e8" /><stop offset=".5" stop-color="#1c5d94" /><stop offset="1" stop-color="#2d4a68" /></radialGradient>
          </defs>
          <circle cx="18" cy="18" r="17" fill="url(#orbFill)" stroke="#0c1a26" />
          <path d="M3 15C6 0 30 0 33 15 24 19 12 19 3 15z" fill="#c9d8e5" opacity=".45" />
          <path d="M10 10c3-2 5-2 8 0l-2 7c-3-2-5-2-8 0z" fill="#e9592b" />
          <path d="M19 11c3 2 5 2 8 0l-2 7c-2 1-5 1-8 0z" fill="#8bc63e" />
          <path d="M8 19c3-2 5-2 8 0l-2 7c-3-2-6-1-8 0z" fill="#3f9ee8" />
          <path d="M17 19c3 2 6 2 8 0l-2 7c-2 1-5 1-8 0z" fill="#f9cd35" />
        </svg>
      </button>
      <div class="quick">
        <button v-for="n in ['ie', 'mail', 'maxthon']" :key="n" :aria-label="n"><Icon :n="n" /></button>
      </div>
      <button class="task"><Icon n="maxthon" /><span>『1061』粽子（一日...</span></button>
      <button class="task active"><Icon n="app" /><span>AutoCAD 2006 - [E:\D...</span></button>
      <div class="tray">
        <button aria-label="Show hidden icons"><svg viewBox="0 0 16 16"><path d="M11 4L6 8l5 4" fill="none" stroke="#fff" stroke-width="2" /></svg></button>
        <Icon v-for="n in tray" :key="n" :n="n" />
        <time>13:55</time>
      </div>
    </footer>
  </div>
</template>

<style>
body { margin: 0; background: #04070f; }
</style>

<style scoped>
.desktop {
  --face: #f5f3f6;
  --ui: "DejaVu Sans Condensed", "Noto Sans CJK SC", sans-serif;
  --fixed: "Liberation Mono", "Noto Sans CJK SC", monospace;
  display: flex;
  flex-direction: column;
  height: 100vh;
  box-sizing: border-box;
  overflow: hidden;
  padding-top: 3px;
  background: linear-gradient(90deg, #0d1938, #28306a 40%, #5b69a5 60%, #242b66 75%, #151c4c);
  font: 12px/16px var(--ui);
  color: #111;
}
button { margin: 0; padding: 0; border: 0; background: none; font: inherit; color: inherit; display: block; }
svg { display: block; }
i { display: block; }
.icon { width: 16px; height: 16px; flex: none; }
.window {
  flex: 1;
  min-height: 0;
  display: flex;
  flex-direction: column;
  margin: 0 3px 0 4px;
  border: solid #123f5b;
  border-width: 0 3px 4px 2px;
  border-radius: 7px 7px 0 0;
  background: var(--face);
  overflow: hidden;
}
.title {
  flex: none;
  height: 27px;
  box-sizing: border-box;
  padding: 0 4px 0 2px;
  display: flex;
  align-items: center;
  gap: 3px;
  border-top: 1px solid #7eb6cc;
  border-bottom: 1px solid #0e4b64;
  background: linear-gradient(90deg, #135379, #15607f 50%, #1d848e 85%, #187583);
  color: #fff;
}
h1 { flex: 1; margin: 0; font: bold 11px/16px var(--ui); text-shadow: 1px 1px 1px #062c42; }
.wbtns { align-self: flex-start; display: flex; border: 1px solid #c4e3e6; border-top: 0; border-radius: 0 0 4px 4px; overflow: hidden; }
.wbtns button { width: 25px; height: 17px; background: linear-gradient(#5aa6a5, #147477 50%, #0c6367); border-right: 1px solid #a2c9cc; }
.wbtns .close { width: 42px; border: 0; background: linear-gradient(#f2977f, #d8442c 50%, #e8391e 51%, #f2654a); }
.wbtns svg { width: 26px; height: 16px; margin: 0 auto; }

.menu { flex: none; height: 20px; display: flex; align-items: center; gap: 11px; padding-left: 4px; font-family: Roboto, "Noto Sans CJK SC", sans-serif; }
.menu > .icon { margin-right: -6px; }
.menu > button { white-space: nowrap; }
.menu > button { font-size: 12px; }
.menu u { font-size: 11px; text-underline-offset: 2px; }
.mdi { margin-left: auto; display: flex; gap: 2px; }
.mdi button { width: 17px; height: 17px; background: #d9d9de; border: solid #aaa; border-width: 0 1px 1px 0; box-sizing: border-box; }
.mdi svg { width: 16px; height: 16px; }

.row { flex: none; height: 28px; display: flex; overflow: hidden; }
.bar {
  display: flex;
  align-items: center;
  box-sizing: border-box;
  flex: none;
  padding: 0 3px 0 4px;
  border: solid #8d8b90;
  border-width: 0 1px 1px 0;
  box-shadow: inset 0 1px #fff;
}
.bar.grow { flex: 1; border-right: 0; padding-right: 0; }
.bar.grow .grip { margin-right: 5px; }
.grip { flex: none; width: 7px; height: 23px; margin-right: 2px; box-sizing: border-box; border: solid #96949a; border-width: 0 1px; box-shadow: inset 2px 0 #fff, inset -3px 0 #e7e5e9; }
.command .grip::after { content: ""; display: block; width: 1px; margin-left: 3px; background: #b4b2b8; }
.group { display: flex; }
.group + .group { margin-left: 6px; }
.tool { width: 23px; height: 24px; display: grid; place-items: center; flex: none; }
.tool.slim { width: 12px; }
.combo {
  position: relative;
  flex: none;
  display: flex;
  align-items: center;
  box-sizing: border-box;
  height: 22px;
  border: 1px solid #77757c;
  border-radius: 2px;
  background: #fff;
  overflow: hidden;
}
.combo select { flex: 1; min-width: 0; height: 20px; appearance: none; border: 0; background: none; padding: 0 18px 0 3px; font: 10px/20px var(--fixed); color: #111; opacity: 1; }
.arrow { position: absolute; top: 1px; right: 1px; bottom: 1px; width: 16px; background: linear-gradient(#fafafd, #dfdfec); pointer-events: none; }
.arrow::after { content: ""; position: absolute; left: 4px; top: 8px; border: 4px solid transparent; border-top-color: #151545; border-bottom: 0; }
.style { width: 99px; }
.style + .tool { margin-left: 6px; }
.style:last-child { flex: 1; border-right: 0; margin-left: 1px; }
.layer { width: 299px; padding-left: 3px; }
.layer select { padding-left: 0; }
.bylayer .combo + .combo { margin-left: 7px; }
.color { width: 149px; margin-left: 2px; padding-left: 2px; }
.color select { padding-left: 0; }
.ltype { width: 159px; }
.weight { width: 124px; }
.plot { width: 119px; background: #f0eef2; padding-left: 6px; }
.plot select { color: #999; }
.plot .arrow { background: #e2e0e5; }
.plot .arrow::after { border-top-color: #aaa; }
.rule { flex: none; width: 60px; height: 1px; margin: 0 2px 0 4px; background: #111; }
.weight .rule { width: 35px; }
.space { width: 174px; margin-left: 4px; }

.work { flex: 1; min-height: 0; display: flex; }
.side { width: 27px; flex: none; box-sizing: border-box; border-right: 1px solid #8d8b90; }
.side.right { width: 25px; border: 0; }
.vbar { width: 25px; box-sizing: border-box; padding: 1px 0 5px; border: solid #9a98a0; border-width: 0 1px 1px 0; display: flex; flex-direction: column; align-items: center; }
.vbar + .vbar { padding-top: 3px; }
.vgrip { width: 19px; height: 6px; box-sizing: border-box; margin-bottom: 1px; border: solid #a3a1a8; border-width: 1px 0; }
.vbar .tool { height: 22px; }
.vgrip + .tool { margin-top: 3px; }
.center { flex: 1; min-width: 0; display: grid; grid-template: minmax(0, 1fr) 17px / minmax(0, 1fr) 17px; border-top: 2px solid #333; margin-right: 3px; box-sizing: border-box; }
.canvas { width: 100%; height: 100%; background: #000; }
.scroll { display: flex; background: #efedf0; }
.scroll button { width: 16px; height: 16px; flex: none; }
.scroll svg { width: 16px; height: 16px; }
.scroll .track { flex: 1; display: flex; align-items: center; }
.scroll.v { flex-direction: column; align-items: center; }
.scroll.v .track { width: 17px; display: block; }
.thumb { width: 14px; height: 13px; border: 1px solid #8e8e94; border-radius: 2px; background: linear-gradient(#fff, #e5e5e8 50%, #c9c9cf); box-sizing: border-box; margin-left: 65%; }
.scroll.v .thumb { margin: 53px auto 0; width: 14px; height: 14px; }
.tabs { grid-column: 1 / 3; display: flex; min-width: 0; }
.nav { display: flex; padding-left: 1px; margin-right: 4px; }
.nav button { width: 18px; height: 16px; box-sizing: border-box; background: #fff; border: solid #aaa; border-width: 0 1px 1px 0; }
.nav svg { width: 16px; height: 15px; }
.tab {
  --cut: polygon(0 0, 100% 0, calc(100% - 6px) 100%, 6px 100%);
  width: 46px;
  height: 16px;
  margin-right: -4px;
  padding: 0 1px 1px;
  background: #111;
  clip-path: var(--cut);
}
.tab span { display: block; background: #fff; clip-path: var(--cut); font: 12px/15px Roboto, "Noto Sans CJK SC", sans-serif; }
.tab.on span { background: #000; color: #fff; font: 10px/15px var(--fixed); }
.hzone { width: 35%; margin-left: auto; display: flex; }
.split { width: 4px; height: 11px; margin-top: 1px; border: 1px solid #999; border-radius: 2px; }
.hzone .scroll { flex: 1; margin-right: 17px; }
.hzone .thumb { margin-left: 62%; }

.command { flex: none; height: 55px; box-sizing: border-box; margin-top: 6px; padding: 4px 8px 0 7px; border-top: 2px solid #111; display: flex; }
.command .grip { height: 44px; margin: 3px 2px 0 0; }
.cmd { flex: 1; min-width: 0; border: solid #222; border-width: 2px 0 0 2px; }
.history { display: flex; height: 29px; background: #fff; border-bottom: 1px solid #888; }
pre { flex: 1; margin: 0; font: 13px/13px var(--fixed); overflow: hidden; }
.scroll.v.small { width: 17px; justify-content: space-between; }
.scroll.v.small button { height: 14px; }
.entry { display: flex; align-items: center; height: 17px; background: #fff; }
.entry label { font: 13px/16px var(--fixed); }
.entry input { flex: 1; min-width: 0; border: 0; padding: 0; background: none; outline: 0; font: 13px/16px var(--fixed); }
.short { width: 66px; margin-right: 17px; }
.short .thumb { margin-left: 0; }

.status { flex: none; height: 24px; box-sizing: border-box; border-top: 1px solid #aaa; padding: 2px 3px 2px 5px; display: flex; align-items: center; gap: 4px; }
.status output { box-sizing: border-box; width: 250px; height: 18px; border: 1px solid; border-color: #999 #ddd #ddd #999; padding-left: 1px; font: 10px/17px var(--fixed); white-space: nowrap; }
.mode { height: 18px; flex: none; box-sizing: border-box; padding: 0 1px; border: 1px solid; border-color: #fff #aaa #aaa #fff; line-height: 16px; }
.mode.on { border-color: #111 #fff #fff #111; }
.stray { margin-left: auto; display: flex; gap: 4px; padding: 0 3px; border: solid #888; border-width: 1px 0 0 1px; }
.more { margin-left: 3px; }
.more svg { width: 16px; height: 16px; }
.size { width: 12px; height: 12px; align-self: flex-end; }

.taskbar {
  flex: none;
  height: 30px;
  box-sizing: border-box;
  display: flex;
  align-items: center;
  padding: 1px 13px 0 12px;
  background: linear-gradient(#8b8d8e 0, #55585a 25%, #34373a 45%, #0a0c0d 50%, #050606);
  border-top: 1px solid #98a3aa;
  color: #fff;
  overflow: hidden;
}
.orb svg { width: 36px; height: 36px; }
.quick { display: flex; gap: 7px; margin: 0 22px 0 21px; }
.task { width: 156px; height: 27px; box-sizing: border-box; display: flex; align-items: center; gap: 4px; padding: 0 1px 0 7px; margin-right: 4px; border: 1px solid #777; border-radius: 3px; background: linear-gradient(#54575a, #303234 48%, #121414 50%, #1e2022); font-family: Roboto, "Noto Sans CJK SC", sans-serif; }
.task span { white-space: nowrap; }
.task.active { background: linear-gradient(#2a2c2e, #111 50%, #050505); font: 11px/16px var(--ui); }
.tray { margin-left: auto; display: flex; align-items: center; gap: 2px; }
.tray button svg { width: 16px; height: 16px; }
.tray time { margin-left: 7px; font-size: 11px; }
</style>
